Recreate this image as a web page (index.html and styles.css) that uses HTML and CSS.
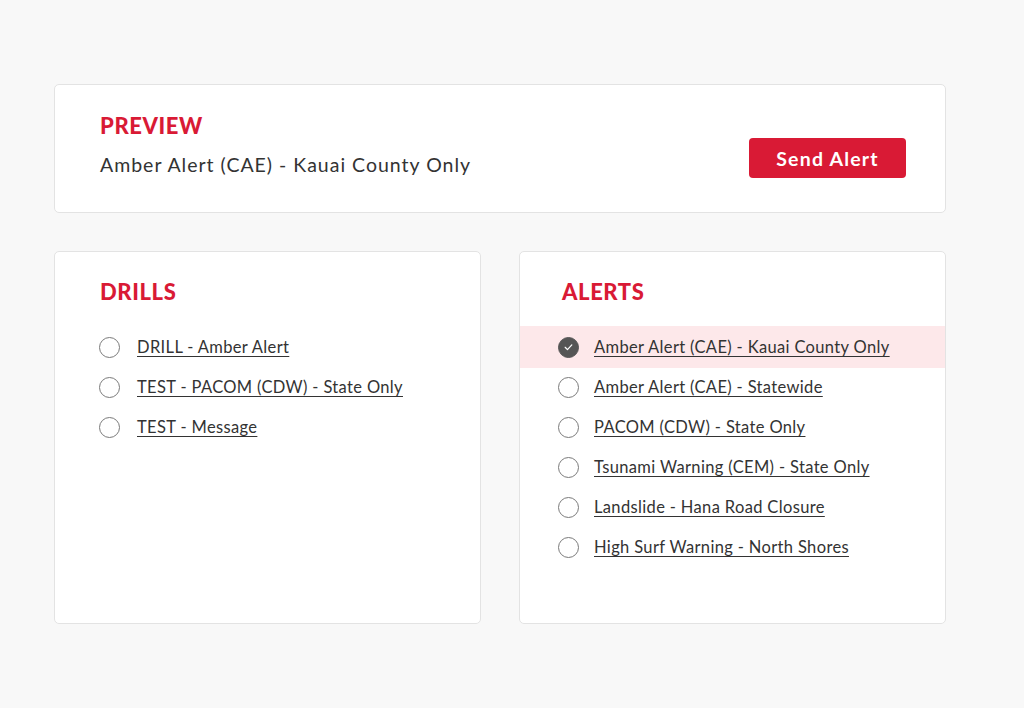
FILE: index.html
```html
<!DOCTYPE html>
<html>
<head>
<meta charset="utf-8">
<link rel="stylesheet" href="styles.css">
</head>
<body>
<div class="page">
  <section class="card preview">
    <div class="preview-text">
      <h2 class="heading">PREVIEW</h2>
      <p class="preview-sub">Amber Alert (CAE) - Kauai County Only</p>
    </div>
    <button class="send">Send Alert</button>
  </section>
  <div class="columns">
    <section class="card list-card drills">
      <h2 class="heading">DRILLS</h2>
      <ul class="list">
        <li class="row"><span class="radio"></span><a class="link">DRILL - Amber Alert</a></li>
        <li class="row"><span class="radio"></span><a class="link">TEST - PACOM (CDW) - State Only</a></li>
        <li class="row"><span class="radio"></span><a class="link">TEST - Message</a></li>
      </ul>
    </section>
    <section class="card list-card alerts">
      <h2 class="heading">ALERTS</h2>
      <ul class="list">
        <li class="row selected"><span class="radio checked"><svg viewBox="0 0 20 20" width="20" height="20"><path d="M6.5 10.3l2.4 2.4 4.6-4.9" fill="none" stroke="#fff" stroke-width="1.3" stroke-linecap="round" stroke-linejoin="round"/></svg></span><a class="link">Amber Alert (CAE) - Kauai County Only</a></li>
        <li class="row"><span class="radio"></span><a class="link">Amber Alert (CAE) - Statewide</a></li>
        <li class="row"><span class="radio"></span><a class="link">PACOM (CDW) - State Only</a></li>
        <li class="row"><span class="radio"></span><a class="link">Tsunami Warning (CEM) - State Only</a></li>
        <li class="row"><span class="radio"></span><a class="link">Landslide - Hana Road Closure</a></li>
        <li class="row"><span class="radio"></span><a class="link">High Surf Warning - North Shores</a></li>
      </ul>
    </section>
  </div>
</div>
</body>
</html>
```

FILE: styles.css
```css
* { box-sizing: border-box; }
html, body { margin: 0; padding: 0; }
body {
  background: #f8f8f8;
  font-family: Lato, "Noto Sans", sans-serif;
  color: #333;
}
.page {
  width: 892px;
  margin-left: 54px;
  padding-top: 84px;
}
.card {
  background: #fff;
  border: 1px solid #e3e3e3;
  border-radius: 5px;
}
.heading {
  margin: 0;
  font-size: 22px;
  line-height: 26px;
  font-weight: 900;
  color: #d91a35;
  letter-spacing: 0.6px;
}
.preview {
  height: 129px;
  display: flex;
  align-items: flex-start;
  justify-content: space-between;
  padding: 28px 39px 0 45px;
}
.preview-sub {
  margin: 13px 0 0;
  font-size: 19.5px;
  line-height: 26px;
  color: #333;
  letter-spacing: 1px;
}
.send {
  margin-top: 25px;
  width: 157px;
  height: 40px;
  border: none;
  border-radius: 4px;
  background: #d91a35;
  color: #fff;
  font-family: Lato, "Noto Sans", sans-serif;
  font-size: 19.5px;
  font-weight: 700;
  letter-spacing: 1.2px;
  padding: 0;
}
.columns {
  display: grid;
  grid-template-columns: 427px 427px;
  column-gap: 38px;
  margin-top: 38px;
}
.list-card {
  height: 373px;
  padding-top: 27px;
}
.drills .heading { padding-left: 45px; }
.alerts .heading { padding-left: 42px; }
.list {
  list-style: none;
  margin: 22px 0 0;
  padding: 0;
}
.row {
  height: 40px;
  display: flex;
  align-items: center;
}
.drills .row { padding-left: 44px; }
.alerts .row { padding-left: 38px; }
.row.selected {
  background: #fde8ea;
  height: 42px;
  margin-top: -1px;
  margin-bottom: -1px;
}
.radio {
  width: 21px;
  height: 21px;
  border: 1px solid #7a7a7a;
  border-radius: 50%;
  flex: none;
  margin-right: 17px;
  display: flex;
  align-items: center;
  justify-content: center;
}
.alerts .radio { margin-right: 15px; }
.radio.checked {
  background: #555;
  border-color: #555;
}
.radio svg { display: block; }
.link {
  font-size: 16.5px;
  color: #333;
  text-decoration: underline;
  text-underline-offset: 3px;
  text-decoration-thickness: 1px;
  letter-spacing: 0.35px;
}
```
